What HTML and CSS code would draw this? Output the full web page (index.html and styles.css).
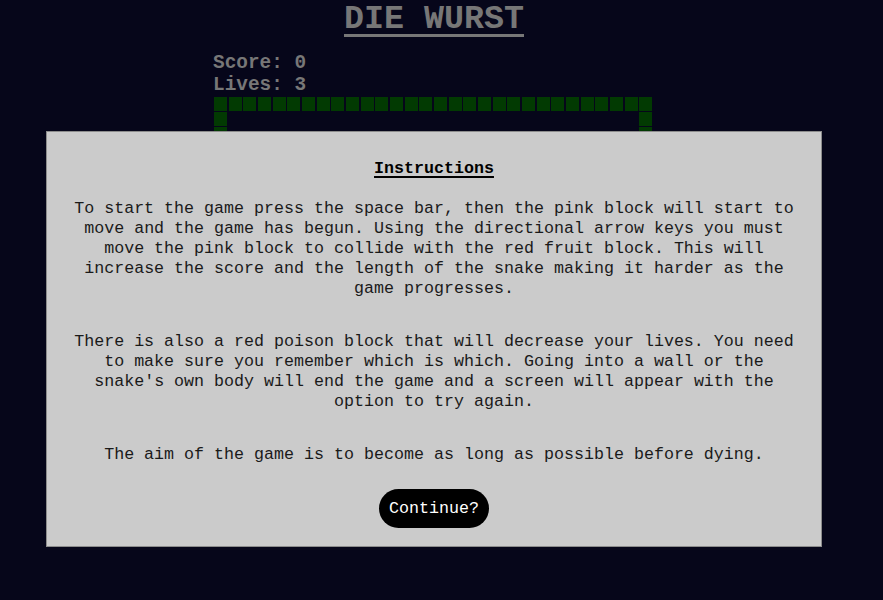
FILE: index.html
```html
<!DOCTYPE html>
<html lang="en">
<head>
<meta charset="utf-8">
<title>Die Wurst</title>
<link rel="stylesheet" href="styles.css">
</head>
<body>
<div class="page">
  <h1 class="title">DIE WURST</h1>
  <div class="game">
    <div class="stats">
      <div class="stat">Score: 0</div>
      <div class="stat">Lives: 3</div>
    </div>
    <div class="board">
      <div class="wall wall-top"></div>
      <div class="wall wall-left"></div>
      <div class="board-inner"></div>
      <div class="wall wall-right"></div>
      <div class="wall wall-bottom"></div>
    </div>
  </div>
</div>

<div class="modal">
  <h3 class="modal-title">Instructions</h3>
  <p class="modal-text">To start the game press the space bar, then the pink block will start to move and the game has begun. Using the directional arrow keys you must move the pink block to collide with the red fruit block. This will increase the score and the length of the snake making it harder as the game progresses.</p>
  <p class="modal-text">There is also a red poison block that will decrease your lives. You need to make sure you remember which is which. Going into a wall or the snake's own body will end the game and a screen will appear with the option to try again.</p>
  <p class="modal-text">The aim of the game is to become as long as possible before dying.</p>
  <button class="continue-btn">Continue?</button>
</div>
</body>
</html>
```

FILE: styles.css
```css
html, body {
  margin: 0;
  padding: 0;
}

body {
  background: #06061a;
  font-family: "Liberation Mono", "DejaVu Sans Mono", monospace;
  font-size: 16.67px;
  height: 600px;
  overflow: hidden;
}

.page {
  width: 868px;
  text-align: center;
}

.title {
  display: inline-block;
  margin: 0 0 14px;
  font-size: 33.33px;
  line-height: normal;
  font-weight: bold;
  color: #777777;
  text-decoration: underline;
  text-decoration-thickness: 3px;
  text-underline-offset: 6px;
}

.game {
  width: 440px;
  margin: 0 auto;
  text-align: left;
}

.stats {
  margin-left: -1px;
}

.stat {
  font-size: 19.4px;
  line-height: 22px;
  font-weight: bold;
  color: #777777;
}

.board {
  margin-top: 1px;
  width: 440px;
  height: 440px;
  display: grid;
  grid-template-columns: 14.667px 1fr 14.667px;
  grid-template-rows: 14.667px 1fr 14.667px;
}

.wall {
  --cell: #023a02;
}

.wall-top,
.wall-bottom {
  grid-column: 1 / 4;
  height: 13.5px;
  background: repeating-linear-gradient(90deg, var(--cell) 0 13px, transparent 13px 14.667px);
}

.wall-left,
.wall-right {
  width: 13px;
  background: repeating-linear-gradient(180deg, var(--cell) 0 13.5px, transparent 13.5px 14.667px);
}

.modal {
  position: absolute;
  left: 46px;
  top: 131px;
  width: 776px;
  height: 416px;
  box-sizing: border-box;
  border: 1px solid #8c8c8c;
  background: #cbcbcb;
  padding: 27px 20px 18px;
  text-align: center;
  color: #1a1a1a;
}

.modal-title {
  display: inline-block;
  margin: 0 0 20px;
  font-size: 16.67px;
  line-height: 20px;
  font-weight: bold;
  color: #000000;
  text-decoration: underline;
  text-decoration-thickness: 2px;
  text-underline-offset: 3px;
}

.modal-text {
  margin: 0 0 33px;
  line-height: 20px;
}

.modal-text:last-of-type {
  margin-bottom: 24px;
}

.continue-btn {
  display: block;
  margin: 0 auto;
  height: 39px;
  padding: 0 10px;
  border: none;
  border-radius: 20px;
  background: #000000;
  color: #ffffff;
  font-family: inherit;
  font-size: 16.67px;
  line-height: 19px;
}
```
